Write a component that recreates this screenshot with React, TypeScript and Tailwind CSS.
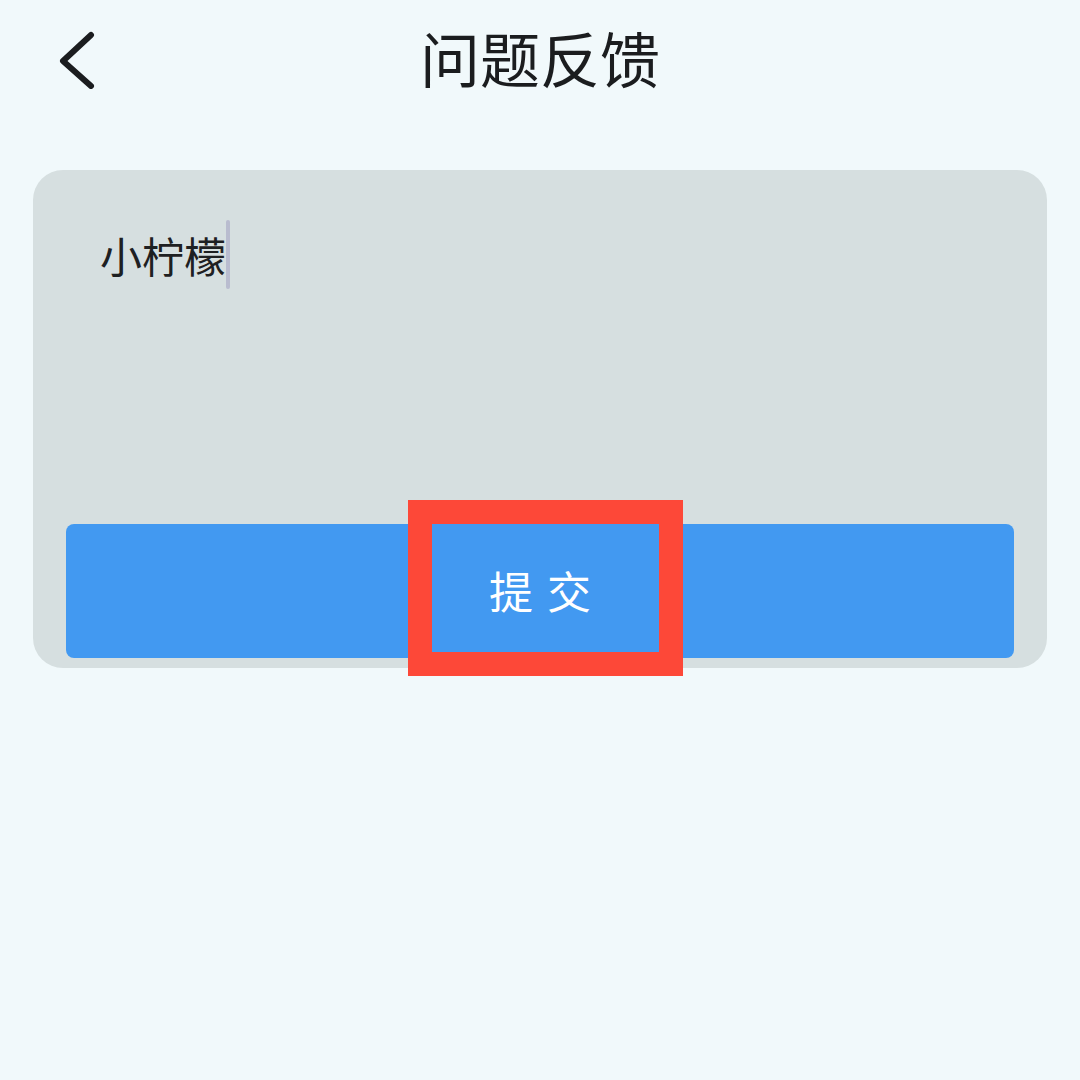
import React from "react";

export default function App() {
  return (
    <div
      className="w-[1080px] h-[1080px] bg-[#f1f9fb] flex flex-col"
      style={{ fontFamily: '"Noto Sans CJK SC", "Noto Sans", sans-serif' }}
    >
      <div className="h-[120px] grid grid-cols-[120px_1fr_120px] items-center">
        <div className="pl-[58px] pb-[2px] flex items-center">
          <svg width="40" height="60" viewBox="0 0 40 60">
            <polyline
              points="33,6 5,32 33,57"
              fill="none"
              stroke="#1b1d1f"
              strokeWidth="6"
              strokeLinecap="round"
              strokeLinejoin="round"
            />
          </svg>
        </div>
        <div className="text-center text-[60px] leading-none text-[#1b1d1f] pb-[6px]">
          问题反馈
        </div>
        <div />
      </div>

      <div className="mt-[50px] mx-[33px] h-[498px] rounded-[30px] bg-[#d6dfe0] flex flex-col">
        <div className="pl-[67px] pt-[50px] flex items-center">
          <span className="text-[42px] leading-[56px] text-[#1e2022]">小柠檬</span>
          <span className="w-[4px] h-[69px] bg-[#b9bccf] rounded-full" />
        </div>
        <div className="mt-auto mx-[33px] mb-[10px] h-[134px] rounded-[8px] bg-[#4299f1] relative flex items-center justify-center gap-[14px] text-white text-[44px] leading-none pb-[3px]">
          <span>提</span>
          <span>交</span>
          <div className="absolute left-[342px] top-[-24px] w-[275px] h-[176px] border-[24px] border-[#fd4838]" />
        </div>
      </div>
    </div>
  );
}
